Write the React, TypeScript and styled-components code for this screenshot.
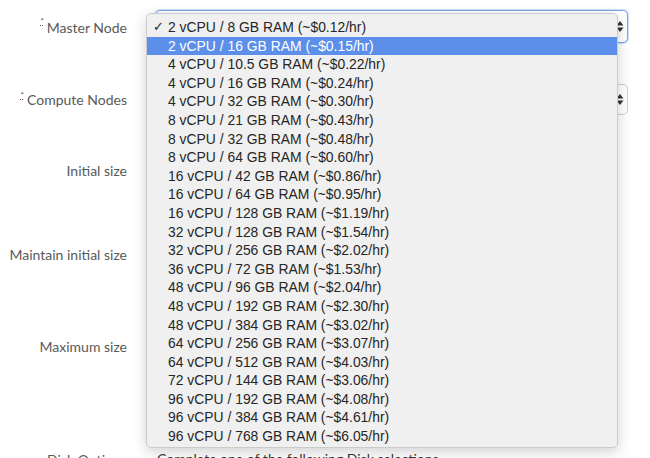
import React from "react";
import styled, { createGlobalStyle } from "styled-components";

const Global = createGlobalStyle`
  html, body { margin: 0; padding: 0; background: #fff; }
  body { width: 650px; height: 458px; overflow: hidden; }
`;

const Page = styled.div`
  position: relative;
  width: 650px;
  height: 458px;
  overflow: hidden;
  font-family: Lato, "Open Sans", sans-serif;
`;

const Form = styled.div`
  display: grid;
  grid-template-columns: 127px 473px;
  column-gap: 28px;
  padding-top: 10px;
`;

const Label = styled.div<{ $h: number }>`
  height: ${(p) => p.$h}px;
  display: flex;
  align-items: center;
  justify-content: flex-end;
  font-size: 14px;
  color: #595959;
  white-space: nowrap;
`;

const Req = styled.abbr`
  font-size: 8px;
  color: #555;
  text-decoration: underline dotted;
  align-self: flex-start;
  margin-top: 7px;
  margin-right: 3px;
  line-height: 1;
`;

const Cell = styled.div<{ $h: number }>`
  height: ${(p) => p.$h}px;
  display: flex;
  align-items: flex-start;
`;

const Select = styled.div<{ $focus?: boolean }>`
  width: 100%;
  height: ${(p) => (p.$focus ? 33 : 31)}px;
  box-sizing: border-box;
  border: 1px solid ${(p) => (p.$focus ? "#7fa6e6" : "#cfcfcf")};
  border-radius: 5px;
  box-shadow: ${(p) => (p.$focus ? "0 0 0 1px rgba(110,160,235,0.35)" : "none")};
  background: #fff;
  display: flex;
  align-items: center;
  justify-content: flex-end;
  padding-right: 3px;
`;

const Arrows = styled.svg`
  width: 8px;
  height: 13px;
`;

const Menu = styled.div`
  position: absolute;
  left: 146px;
  top: 13px;
  width: 472px;
  height: 435px;
  box-sizing: border-box;
  background: #f0f0f0;
  border: 1px solid #cbcbcb;
  border-radius: 5px;
  box-shadow: 0 4px 14px rgba(0, 0, 0, 0.18);
  padding-top: 4px;
  font-family: "Liberation Sans", Arial, sans-serif;
`;

const Item = styled.div<{ $active?: boolean }>`
  height: 18.6px;
  line-height: 18.6px;
  font-size: 13.9px;
  padding-left: 21px;
  position: relative;
  color: ${(p) => (p.$active ? "#fff" : "#262626")};
  background: ${(p) => (p.$active ? "#5b8fe9" : "transparent")};
  white-space: nowrap;
`;

const Check = styled.span`
  position: absolute;
  left: 6px;
  top: 0;
  font-size: 13px;
`;

const Bottom = styled.div`
  position: absolute;
  top: 450px;
  left: 0;
  display: grid;
  grid-template-columns: 127px 1fr;
  column-gap: 30px;
  font-size: 14px;
  color: #333;
`;

const options = [
  "2 vCPU / 8 GB RAM (~$0.12/hr)",
  "2 vCPU / 16 GB RAM (~$0.15/hr)",
  "4 vCPU / 10.5 GB RAM (~$0.22/hr)",
  "4 vCPU / 16 GB RAM (~$0.24/hr)",
  "4 vCPU / 32 GB RAM (~$0.30/hr)",
  "8 vCPU / 21 GB RAM (~$0.43/hr)",
  "8 vCPU / 32 GB RAM (~$0.48/hr)",
  "8 vCPU / 64 GB RAM (~$0.60/hr)",
  "16 vCPU / 42 GB RAM (~$0.86/hr)",
  "16 vCPU / 64 GB RAM (~$0.95/hr)",
  "16 vCPU / 128 GB RAM (~$1.19/hr)",
  "32 vCPU / 128 GB RAM (~$1.54/hr)",
  "32 vCPU / 256 GB RAM (~$2.02/hr)",
  "36 vCPU / 72 GB RAM (~$1.53/hr)",
  "48 vCPU / 96 GB RAM (~$2.04/hr)",
  "48 vCPU / 192 GB RAM (~$2.30/hr)",
  "48 vCPU / 384 GB RAM (~$3.02/hr)",
  "64 vCPU / 256 GB RAM (~$3.07/hr)",
  "64 vCPU / 512 GB RAM (~$4.03/hr)",
  "72 vCPU / 144 GB RAM (~$3.06/hr)",
  "96 vCPU / 192 GB RAM (~$4.08/hr)",
  "96 vCPU / 384 GB RAM (~$4.61/hr)",
  "96 vCPU / 768 GB RAM (~$6.05/hr)",
];

const UpDown = () => (
  <Arrows viewBox="0 0 8 13">
    <path d="M4 1 L7.5 5.5 L0.5 5.5 Z" fill="#333" />
    <path d="M4 12 L7.5 7.5 L0.5 7.5 Z" fill="#333" />
  </Arrows>
);

export default function App() {
  return (
    <Page>
      <Global />
      <Form>
        <Label $h={34}>
          <Req title="required">*</Req>Master Node
        </Label>
        <Cell $h={74}>
          <Select $focus>
            <UpDown />
          </Select>
        </Cell>
        <Label $h={31}>
          <Req title="required">*</Req>Compute Nodes
        </Label>
        <Cell $h={44}>
          <Select>
            <UpDown />
          </Select>
        </Cell>
        <Label $h={84}>Initial size</Label>
        <Cell $h={84} />
        <Label $h={84}>Maintain initial size</Label>
        <Cell $h={84} />
        <Label $h={100}>Maximum size</Label>
        <Cell $h={100} />
      </Form>
      <Menu>
        {options.map((o, i) => (
          <Item key={o} $active={i === 1}>
            {i === 0 && <Check>✓</Check>}
            {o}
          </Item>
        ))}
      </Menu>
      <Bottom>
        <Label $h={18}>Disk Options</Label>
        <div>Complete one of the following Disk selections</div>
      </Bottom>
    </Page>
  );
}
